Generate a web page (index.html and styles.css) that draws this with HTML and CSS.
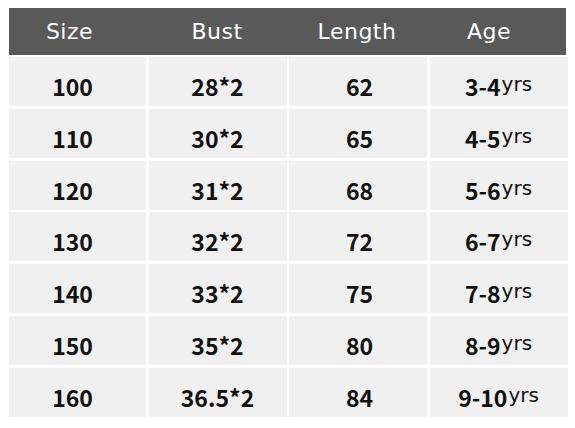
FILE: index.html
```html
<!DOCTYPE html>
<html>
<head>
<meta charset="utf-8">
<link rel="stylesheet" href="styles.css">
</head>
<body>
<div class="chart">
  <div class="head">
    <div class="h c1">Size</div>
    <div class="h">Bust</div>
    <div class="h c3">Length</div>
    <div class="h c4">Age</div>
  </div>
  <div class="rows">
    <div class="cell c1"><span>100</span></div><div class="cell"><span>28*2</span></div><div class="cell c3"><span>62</span></div><div class="cell"><span>3-4<span class="yrs">yrs</span></span></div>
    <div class="cell c1"><span>110</span></div><div class="cell"><span>30*2</span></div><div class="cell c3"><span>65</span></div><div class="cell"><span>4-5<span class="yrs">yrs</span></span></div>
    <div class="cell c1"><span>120</span></div><div class="cell"><span>31*2</span></div><div class="cell c3"><span>68</span></div><div class="cell"><span>5-6<span class="yrs">yrs</span></span></div>
    <div class="cell c1"><span>130</span></div><div class="cell"><span>32*2</span></div><div class="cell c3"><span>72</span></div><div class="cell"><span>6-7<span class="yrs">yrs</span></span></div>
    <div class="cell c1"><span>140</span></div><div class="cell"><span>33*2</span></div><div class="cell c3"><span>75</span></div><div class="cell"><span>7-8<span class="yrs">yrs</span></span></div>
    <div class="cell c1"><span>150</span></div><div class="cell"><span>35*2</span></div><div class="cell c3"><span>80</span></div><div class="cell"><span>8-9<span class="yrs">yrs</span></span></div>
    <div class="cell c1"><span>160</span></div><div class="cell"><span>36.5*2</span></div><div class="cell c3"><span>84</span></div><div class="cell"><span>9-10<span class="yrs">yrs</span></span></div>
  </div>
</div>
</body>
</html>
```
FILE: styles.css
```css
html, body {
  margin: 0;
  padding: 0;
  background: #ffffff;
}
.chart {
  width: 557px;
  padding: 8px 9px;
}
.head {
  display: grid;
  grid-template-columns: 137px 138px 138px 138px;
  column-gap: 2px;
  height: 47px;
  background: #595959;
}
.h {
  display: flex;
  align-items: center;
  justify-content: center;
  color: #ffffff;
  font-family: "DejaVu Sans", sans-serif;
  font-size: 22px;
  letter-spacing: 0.5px;
}
.head .c1 { padding-right: 16px; }
.head .c4 { padding-right: 16px; }
.rows {
  margin-top: 2px;
  display: grid;
  grid-template-columns: 137px 138px 138px 138px;
  grid-auto-rows: 49px;
  column-gap: 2.5px;
  row-gap: 2.8px;
}
.cell {
  display: flex;
  align-items: center;
  justify-content: center;
  background: #f0f0f0;
  color: #111111;
  font-family: "Noto Sans CJK SC", "Noto Sans", sans-serif;
  font-weight: 700;
  font-size: 23px;
  padding-top: 9px;
  box-sizing: border-box;
}
.rows .c1 { padding-right: 10px; }
.rows .c3 { padding-left: 3px; }
.yrs {
  font-family: "DejaVu Sans", sans-serif;
  font-weight: 400;
  font-size: 20px;
  vertical-align: 5px;
  margin-left: 1px;
}
```
